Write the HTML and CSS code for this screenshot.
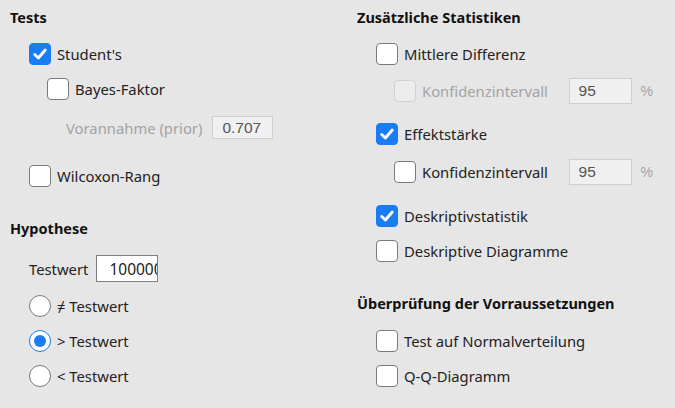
FILE: index.html
```html
<!DOCTYPE html>
<html lang="de">
<head>
<meta charset="utf-8">
<title>Tests</title>
<link rel="stylesheet" href="styles.css">
</head>
<body>
<div class="page">
  <div class="col col-left">
    <div class="heading">Tests</div>
    <div class="row r-student"><span class="cb checked"><svg viewBox="0 0 22 22"><path d="M5.2 11.6 L9.2 15.4 L16.8 6.6" /></svg></span><span class="lbl">Student's</span></div>
    <div class="row r-bayes ind1"><span class="cb"></span><span class="lbl">Bayes-Faktor</span></div>
    <div class="row r-prior ind2"><span class="lbl dis">Vorannahme (prior)</span><span class="inp dis-inp w61">0.707</span></div>
    <div class="row r-wilc"><span class="cb"></span><span class="lbl">Wilcoxon-Rang</span></div>
    <div class="heading h-hyp">Hypothese</div>
    <div class="row r-testwert"><span class="lbl plain">Testwert</span><span class="inp val-inp">100000</span></div>
    <div class="row r-radio1"><span class="rb"></span><span class="lbl">≠ Testwert</span></div>
    <div class="row r-radio"><span class="rb on"></span><span class="lbl">&gt; Testwert</span></div>
    <div class="row r-radio"><span class="rb"></span><span class="lbl">&lt; Testwert</span></div>
  </div>
  <div class="col col-right">
    <div class="heading">Zusätzliche Statistiken</div>
    <div class="row r-student"><span class="cb"></span><span class="lbl">Mittlere Differenz</span></div>
    <div class="row r-konf1 ind1b"><span class="cb disabled"></span><span class="lbl dis">Konfidenzintervall</span><span class="spacer"></span><span class="inp dis-inp w63">95</span><span class="pct">%</span></div>
    <div class="row r-effekt"><span class="cb checked"><svg viewBox="0 0 22 22"><path d="M5.2 11.6 L9.2 15.4 L16.8 6.6" /></svg></span><span class="lbl">Effektstärke</span></div>
    <div class="row r-konf2 ind1b"><span class="cb"></span><span class="lbl">Konfidenzintervall</span><span class="spacer"></span><span class="inp dis-inp w63">95</span><span class="pct">%</span></div>
    <div class="row r-deskr"><span class="cb checked"><svg viewBox="0 0 22 22"><path d="M5.2 11.6 L9.2 15.4 L16.8 6.6" /></svg></span><span class="lbl">Deskriptivstatistik</span></div>
    <div class="row r-radio"><span class="cb"></span><span class="lbl">Deskriptive Diagramme</span></div>
    <div class="heading h-hyp">Überprüfung der Vorraussetzungen</div>
    <div class="row r-norm"><span class="cb"></span><span class="lbl">Test auf Normalverteilung</span></div>
    <div class="row r-radio"><span class="cb"></span><span class="lbl">Q-Q-Diagramm</span></div>
  </div>
</div>
</body>
</html>
```
FILE: styles.css
```css
html, body {
  margin: 0;
  padding: 0;
  background: #e6e6e6;
}
body {
  font-family: "Noto Sans", "Open Sans", sans-serif;
  font-size: 14.8px;
  color: #222;
}
.page {
  display: grid;
  grid-template-columns: 347px 318px;
  padding: 7px 0 0 10px;
  height: 401px;
  box-sizing: border-box;
  overflow: hidden;
}
.col {
  display: flex;
  flex-direction: column;
  align-items: flex-start;
}
.heading {
  font-weight: 700;
  font-size: 14.5px;
  line-height: 20px;
  height: 20px;
  color: #111;
}
.row {
  display: flex;
  align-items: center;
  height: 22px;
  margin-top: 13px;
  padding-left: 19px;
}
.ind1 { padding-left: 37px; }
.ind2 { padding-left: 56px; }
.ind1b { padding-left: 37px; }

.r-student { margin-top: 16px; }
.r-prior { margin-top: 16px; height: 23px; }
.r-wilc { margin-top: 26px; }
.h-hyp { margin-top: 31px; }
.r-testwert { margin-top: 17px; height: 27px; }
.r-radio1 { margin-top: 13px; }
.r-radio { margin-top: 13px; }
.r-konf1 { margin-top: 13px; height: 26px; width: 296px; box-sizing: border-box; }
.r-effekt { margin-top: 19px; }
.r-konf2 { margin-top: 14px; height: 26px; width: 296px; box-sizing: border-box; }
.r-deskr { margin-top: 20px; }
.r-norm { margin-top: 17px; }

.cb {
  width: 22px;
  height: 22px;
  box-sizing: border-box;
  border: 1px solid #7a7a7a;
  border-radius: 4px;
  background: #fff;
  flex: none;
  display: flex;
}
.cb.checked {
  background: #1a7cf3;
  border-color: #1a7cf3;
}
.cb svg {
  width: 20px;
  height: 20px;
}
.cb svg path {
  fill: none;
  stroke: #fff;
  stroke-width: 3.2;
  stroke-linecap: round;
  stroke-linejoin: round;
}
.cb.disabled {
  background: #ececec;
  border-color: #d2d2d2;
}
.rb {
  width: 22px;
  height: 22px;
  box-sizing: border-box;
  border: 1px solid #7a7a7a;
  border-radius: 50%;
  background: #fff;
  flex: none;
  display: flex;
  align-items: center;
  justify-content: center;
}
.rb.on {
  border: 1.5px solid #1a7cf3;
}
.rb.on::after {
  content: "";
  width: 12px;
  height: 12px;
  border-radius: 50%;
  background: #1a7cf3;
}
.lbl {
  margin-left: 6px;
  white-space: nowrap;
  line-height: 20px;
}
.lbl.plain { margin-left: 0; }
.ind2 .lbl { margin-left: 0; }
.lbl.dis { color: #a3a3a3; }
.inp {
  box-sizing: border-box;
  height: 100%;
  display: flex;
  align-items: center;
  white-space: nowrap;
  overflow: hidden;
}
.dis-inp {
  font-family: "Liberation Sans", Arial, sans-serif;
  font-size: 15.5px;
  background: #f0f0f0;
  border: 1px solid #cfcfcf;
  color: #555;
  padding-left: 9px;
}
.ind2 .inp { margin-left: 10px; }
.w61 { width: 61px; }
.w63 { width: 63px; }
.val-inp {
  margin-left: 8px;
  width: 62px;
  background: #fff;
  border: 1px solid #7f7f7f;
  padding-left: 12px;
  color: #222;
  font-size: 15.5px;
}
.spacer { flex: 1; }
.pct {
  margin-left: 9px;
  color: #a3a3a3;
  font-family: "Liberation Sans", Arial, sans-serif;
  font-size: 14px;
}
```
